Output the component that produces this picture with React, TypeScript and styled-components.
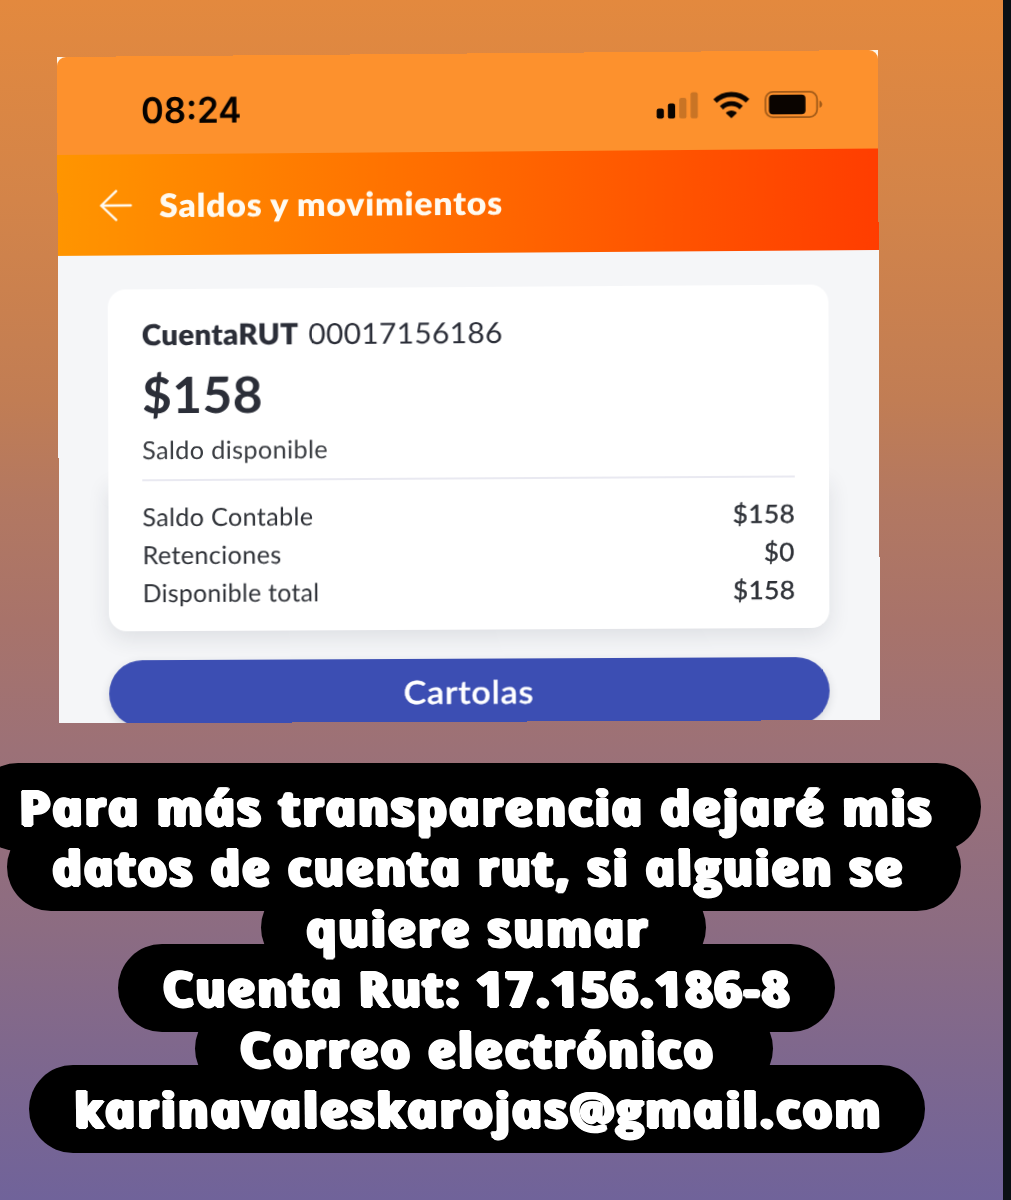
import React, { useLayoutEffect, useRef, useState } from "react";
import styled, { createGlobalStyle } from "styled-components";

const GlobalStyle = createGlobalStyle`
  html, body { margin: 0; padding: 0; background: #0a1014; }
  * { box-sizing: border-box; }
`;

const Story = styled.main`
  width: 1011px;
  height: 1200px;
  overflow: hidden;
  border-right: 8px solid #0a1014;
  background: linear-gradient(
    180deg,
    #e3893e 0px,
    #d38449 200px,
    #c17d54 400px,
    #b37861 500px,
    #a8736a 620px,
    #9c7177 750px,
    #8c6c82 930px,
    #7d678f 1070px,
    #70639a 1200px
  );
  font-family: "Lato", "Open Sans", sans-serif;
`;

/* The pasted capture is slightly tilted, a bit more at its top than at its bottom. */
const Capture = styled.section`
  display: flex;
  flex-direction: column;
  width: 820px;
  height: 667px;
  margin: 57px 0 0 57px;
  overflow: hidden;
  background: #fdf6ec;
  transform-origin: 0 0;
  transform: matrix3d(
    0.995993, -0.0084921, 0, -0.0000063666,
    0.0037505, 0.999872, 0, 0.000000933,
    0, 0, 1, 0,
    0, 0, 0, 1
  );
`;

const StatusBar = styled.div`
  display: flex;
  flex: none;
  align-items: center;
  justify-content: space-between;
  height: 98px;
  padding: 9px 55px 0 84px;
  border-radius: 9px 9px 0 0;
  background: #fd912d;
`;

const Clock = styled.div`
  padding-top: 2px;
  font: 600 35.5px/44px "Inter", "Liberation Sans", sans-serif;
  color: #050200;
`;

const StatusIcons = styled.div`
  display: flex;
  align-items: center;
  gap: 15px;
  svg { display: block; }
`;

const Header = styled.header`
  display: flex;
  flex: none;
  align-items: center;
  gap: 27px;
  height: 101px;
  padding: 0 0 0 42px;
  background: linear-gradient(92deg, #ff9500 0%, #ff6a00 50%, #ff3d00 100%);
  color: #fffaf0;
`;

const Heading = styled.h1`
  margin: 0;
  font-size: 32.5px;
  font-weight: 800;
  line-height: 40px;
  letter-spacing: 0.7px;
`;

const Body = styled.div`
  flex: 1;
  padding: 34px 50px 0;
  background: #f5f6f8;
  letter-spacing: 0.3px;
`;

const CardTop = styled.div`
  position: relative;
  z-index: 1;
  padding: 25px 34px 11px;
  border-radius: 18px 18px 0 0;
  background: #fff;
  color: #2b2e38;
`;

const CardBottom = styled.div`
  padding: 0 34px 20px;
  border-radius: 0 0 18px 18px;
  background: #fff;
  box-shadow: 0 8px 22px rgba(40, 45, 60, 0.11);
  color: #2f3238;
`;

const Divider = styled.div`
  position: relative;
  z-index: 2;
  height: 2px;
  margin-bottom: 16px;
  background: #e9e9f1;
`;

const Account = styled.div`
  display: flex;
  gap: 10px;
  font-size: 29px;
  line-height: 40px;
  strong { font-weight: 800; }
`;

const Balance = styled.div`
  margin-top: 10px;
  font-size: 50px;
  font-weight: 700;
  line-height: 60px;
`;

const Caption = styled.div`
  margin-top: 6px;
  font-size: 25px;
  line-height: 38px;
  color: #3a3d42;
`;

const Row = styled.div`
  display: flex;
  justify-content: space-between;
  font-size: 25px;
  line-height: 38px;
`;

const Amount = styled.span`
  -webkit-text-stroke: 0.4px currentColor;
  font-weight: 400;
`;

const Button = styled.button`
  display: flex;
  align-items: center;
  justify-content: center;
  width: 720px;
  height: 67px;
  margin: 29px 0 0;
  padding: 0 0 2px;
  border: 0;
  border-radius: 34px;
  background: #3c4eb3;
  box-shadow: 0 3px 8px rgba(40, 45, 60, 0.16);
  color: #fff;
  font: 600 32px/40px "Lato", sans-serif;
  letter-spacing: 0.7px;
  -webkit-text-stroke: 0.4px #fff;
`;

const Message = styled.section`
  display: flex;
  flex-direction: column;
  align-items: flex-start;
  margin-top: 39px;
`;

const Bubble = styled.p<{ $left: number; $width: number }>`
  flex: none;
  width: ${(p) => p.$width}px;
  height: 87.5px;
  margin: 0 0 -27.1px ${(p) => p.$left}px;
  padding: 10px 0 0 44px;
  border-radius: 44px;
  background: #000;
  color: #fff;
  font: italic 700 47.5px/68px "Open Sans", "Noto Sans", sans-serif;
  letter-spacing: 1.7px;
  word-spacing: 1px;
`;

/* Italic letter shapes (round one-storey a) stood upright, swollen evenly on all sides. */
const Upright = styled.span`
  position: relative;
  z-index: 1;
  display: inline-block;
  transform: skewX(13.5deg);
  text-shadow:
    2px 0 #fff, -2px 0 #fff, 0 1.5px #fff, 0 -1.5px #fff,
    1px 1px #fff, -1px 1px #fff, 1px -1px #fff, -1px -1px #fff;
`;

const Frame = styled.span`
  display: inline-block;
  white-space: pre;
  text-align: left;
`;

const Stretch = styled.span`
  display: inline-block;
  transform-origin: 0 50%;
`;

/* Widens its text so that the line comes out at the given width. */
function Fitted({ width, children }: { width: number; children: string }) {
  const ref = useRef<HTMLSpanElement>(null);
  const [scale, setScale] = useState(1);
  useLayoutEffect(() => {
    if (ref.current) setScale(width / ref.current.offsetWidth);
  }, [width, children]);
  return (
    <Frame style={{ width }}>
      <Stretch ref={ref} style={{ transform: `scaleX(${scale})` }}>{children}</Stretch>
    </Frame>
  );
}

const Signal = () => (
  <svg width="42" height="27" viewBox="0 0 42 27">
    <rect x="0.6" y="16.5" width="7.2" height="10" rx="2.2" fill="#0a0400" />
    <rect x="11.8" y="11.6" width="7.2" height="15" rx="2.2" fill="#0a0400" />
    <rect x="23.1" y="6" width="7.2" height="20.6" rx="2.2" fill="#c97425" />
    <rect x="34.4" y="0.4" width="7.2" height="26.2" rx="2.2" fill="#c97425" />
  </svg>
);

const Wifi = () => (
  <svg width="36" height="27" viewBox="0 0 36 27" fill="none" stroke="#0a0400">
    <path d="M1.8 9.6A23 23 0 0 1 34.2 9.6" strokeWidth="5" />
    <path d="M8.2 16.2A14 14 0 0 1 27.8 16.2" strokeWidth="4.8" />
    <path d="M13.4 21.4Q18 18.2 22.6 21.4L18 25.8Z" fill="#0a0400" strokeWidth="1.4" strokeLinejoin="round" />
  </svg>
);

const Battery = () => (
  <svg width="58" height="27" viewBox="0 0 58 27">
    <rect x="0.9" y="0.9" width="51.4" height="25.2" rx="7.5" fill="none" stroke="#a35b18" strokeWidth="1.8" />
    <rect x="4.4" y="3.7" width="36.4" height="19.6" rx="4" fill="#0a0400" />
    <path d="M54.6 10C58.3 11 58.3 16 54.6 17Z" fill="#a35b18" />
  </svg>
);

const Back = () => (
  <svg width="33" height="32" viewBox="0 0 33 32" fill="none" stroke="currentColor" strokeWidth="2.4" strokeLinecap="round" strokeLinejoin="round">
    <path d="M31.5 16H1.8M16.8 1.6L1.8 16L16.8 30.4" />
  </svg>
);

const rows = [
  { label: "Saldo Contable", width: 171, amount: "$158", amountWidth: 62 },
  { label: "Retenciones", width: 139, amount: "$0", amountWidth: 31 },
  { label: "Disponible total", width: 177, amount: "$158", amountWidth: 62 },
];

const lines = [
  { text: "Para más transparencia dejaré mis", left: -26, width: 1007, ink: 914 },
  { text: "datos de cuenta rut, si alguien se", left: 7, width: 954, ink: 852 },
  { text: "quiere sumar", left: 261, width: 445, ink: 343 },
  { text: "Cuenta Rut: 17.156.186-8", left: 118, width: 717, ink: 628 },
  { text: "Correo electrónico", left: 195, width: 578, ink: 475 },
  { text: "karinavaleskarojas@gmail.com", left: 29, width: 896, ink: 808 },
];

export default function App() {
  return (
    <>
      <GlobalStyle />
      <Story>
        <Capture>
          <StatusBar>
            <Clock><Fitted width={101}>08:24</Fitted></Clock>
            <StatusIcons>
              <Signal />
              <Wifi />
              <Battery />
            </StatusIcons>
          </StatusBar>
          <Header>
            <Back />
            <Heading><Fitted width={344}>Saldos y movimientos</Fitted></Heading>
          </Header>
          <Body>
            <CardTop>
              <Account>
                <strong><Fitted width={157}>CuentaRUT</Fitted></strong>
                <Fitted width={194}>00017156186</Fitted>
              </Account>
              <Balance><Fitted width={121}>$158</Fitted></Balance>
              <Caption><Fitted width={186}>Saldo disponible</Fitted></Caption>
            </CardTop>
            <CardBottom>
              <Divider />
              {rows.map((r) => (
                <Row key={r.label}>
                  <Fitted width={r.width}>{r.label}</Fitted>
                  <Amount><Fitted width={r.amountWidth}>{r.amount}</Fitted></Amount>
                </Row>
              ))}
            </CardBottom>
            <Button><Fitted width={130}>Cartolas</Fitted></Button>
          </Body>
        </Capture>
        <Message>
          {lines.map((l) => (
            <Bubble key={l.text} $left={l.left} $width={l.width}>
              <Upright><Fitted width={l.ink}>{l.text}</Fitted></Upright>
            </Bubble>
          ))}
        </Message>
      </Story>
    </>
  );
}
